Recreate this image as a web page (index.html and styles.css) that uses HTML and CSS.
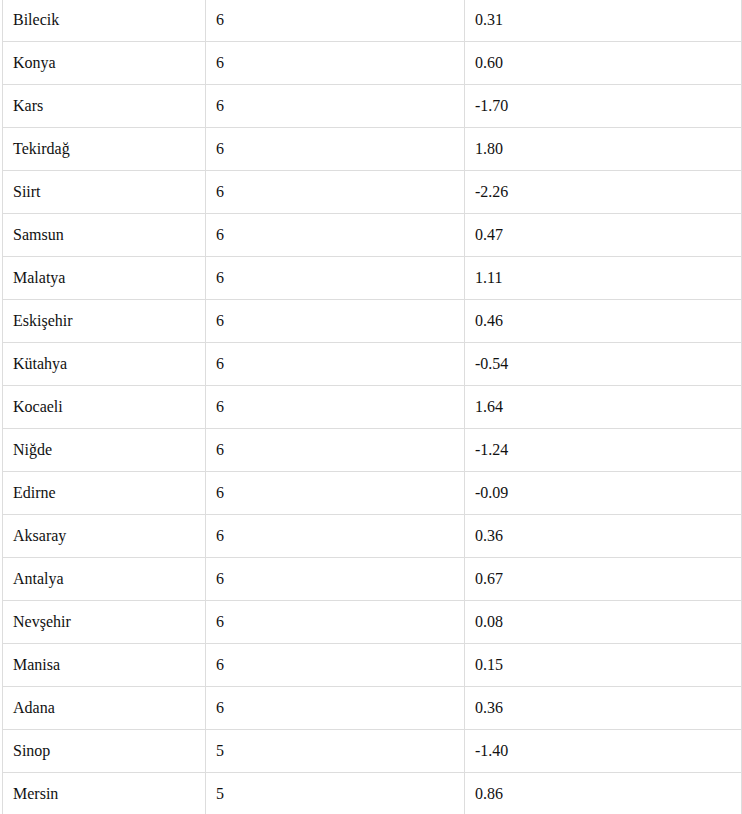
FILE: index.html
```html
<!DOCTYPE html>
<html lang="tr">
<head>
<meta charset="utf-8">
<title>İller</title>
<link rel="stylesheet" href="styles.css">
</head>
<body>
<div class="wrap">
<table class="data">
<colgroup><col class="c1"><col class="c2"><col class="c3"></colgroup>
<tbody>
<tr><td>Bilecik</td><td>6</td><td>0.31</td></tr>
<tr><td>Konya</td><td>6</td><td>0.60</td></tr>
<tr><td>Kars</td><td>6</td><td>-1.70</td></tr>
<tr><td>Tekirdağ</td><td>6</td><td>1.80</td></tr>
<tr><td>Siirt</td><td>6</td><td>-2.26</td></tr>
<tr><td>Samsun</td><td>6</td><td>0.47</td></tr>
<tr><td>Malatya</td><td>6</td><td>1.11</td></tr>
<tr><td>Eskişehir</td><td>6</td><td>0.46</td></tr>
<tr><td>Kütahya</td><td>6</td><td>-0.54</td></tr>
<tr><td>Kocaeli</td><td>6</td><td>1.64</td></tr>
<tr><td>Niğde</td><td>6</td><td>-1.24</td></tr>
<tr><td>Edirne</td><td>6</td><td>-0.09</td></tr>
<tr><td>Aksaray</td><td>6</td><td>0.36</td></tr>
<tr><td>Antalya</td><td>6</td><td>0.67</td></tr>
<tr><td>Nevşehir</td><td>6</td><td>0.08</td></tr>
<tr><td>Manisa</td><td>6</td><td>0.15</td></tr>
<tr><td>Adana</td><td>6</td><td>0.36</td></tr>
<tr><td>Sinop</td><td>5</td><td>-1.40</td></tr>
<tr><td>Mersin</td><td>5</td><td>0.86</td></tr>
</tbody>
</table>
</div>
</body>
</html>
```

FILE: styles.css
```css
html, body {
  margin: 0;
  padding: 0;
  background: #ffffff;
}
.wrap {
  padding-left: 2px;
  overflow: hidden;
}
.data {
  margin-top: -2px;
  width: 739px;
  border-collapse: collapse;
  table-layout: fixed;
  font-family: "Liberation Serif", "DejaVu Serif", serif;
  font-size: 16px;
  line-height: 24px;
  color: #111111;
  font-variant-numeric: oldstyle-nums;
}
.c1 { width: 203px; }
.c2 { width: 259px; }
.c3 { width: 277px; }
.data td {
  border: 1px solid #dddddd;
  padding: 9px 10px;
  height: 24px;
  vertical-align: middle;
  text-align: left;
}
```
